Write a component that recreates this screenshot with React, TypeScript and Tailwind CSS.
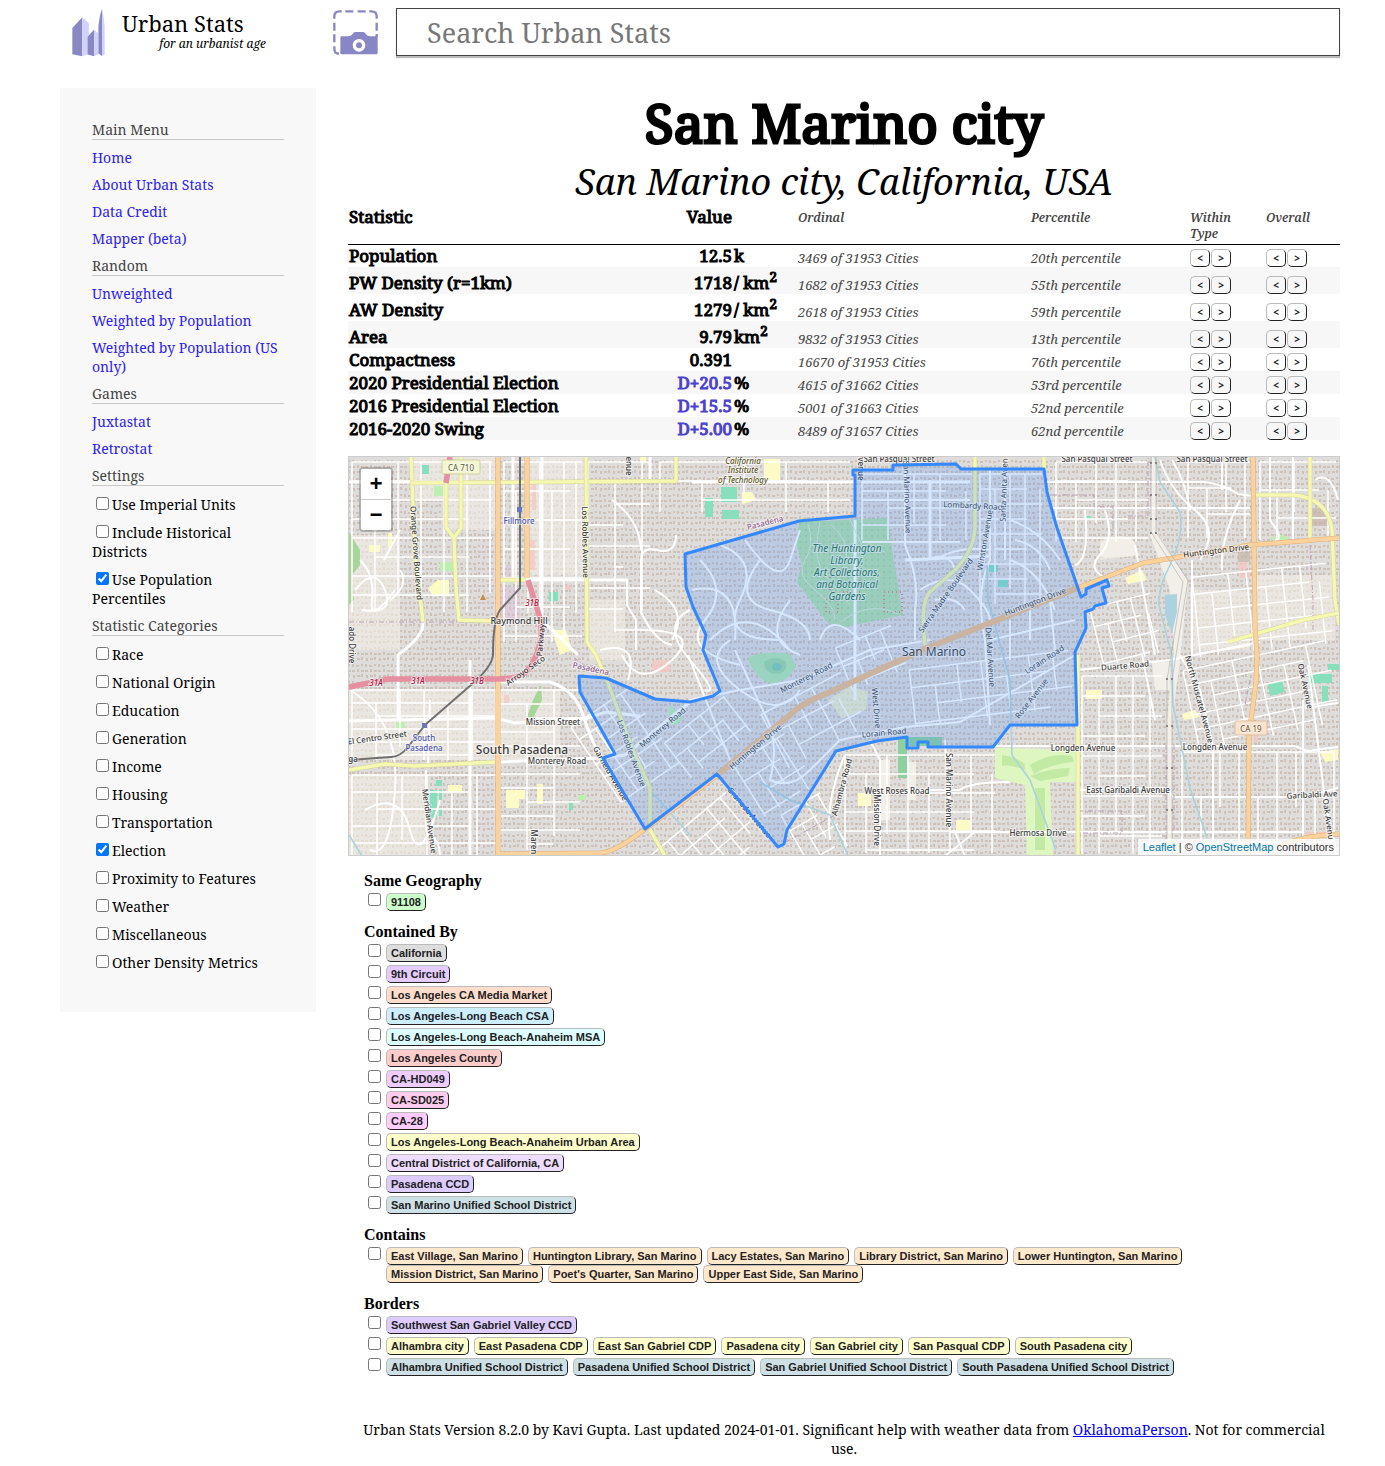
import React from "react";

const SERIF = "font-['Noto_Serif','DejaVu_Serif_Condensed',serif]";

const menu = [
  { title: "Main Menu", links: ["Home", "About Urban Stats", "Data Credit", "Mapper (beta)"] },
  { title: "Random", links: ["Unweighted", "Weighted by Population", "Weighted by Population (US only)"] },
  { title: "Games", links: ["Juxtastat", "Retrostat"] },
];

const settings = [
  { title: "Settings", items: ["Use Imperial Units", "Include Historical Districts", "Use Population Percentiles"] },
  {
    title: "Statistic Categories",
    items: ["Race", "National Origin", "Education", "Generation", "Income", "Housing", "Transportation", "Election", "Proximity to Features", "Weather", "Miscellaneous", "Other Density Metrics"],
  },
];

const checkedItems = ["Use Population Percentiles", "Election"];

type Stat = { name: string; value: string; unit: React.ReactNode; ordinal: string; pct: string; party?: boolean };

const stats: Stat[] = [
  { name: "Population", value: "12.5", unit: "k", ordinal: "3469 of 31953 Cities", pct: "20th percentile" },
  { name: "PW Density (r=1km)", value: "1718", unit: <>/ km<Sq /></>, ordinal: "1682 of 31953 Cities", pct: "55th percentile" },
  { name: "AW Density", value: "1279", unit: <>/ km<Sq /></>, ordinal: "2618 of 31953 Cities", pct: "59th percentile" },
  { name: "Area", value: "9.79", unit: <>km<Sq /></>, ordinal: "9832 of 31953 Cities", pct: "13th percentile" },
  { name: "Compactness", value: "0.391", unit: "", ordinal: "16670 of 31953 Cities", pct: "76th percentile" },
  { name: "2020 Presidential Election", value: "D+20.5", unit: "%", ordinal: "4615 of 31662 Cities", pct: "53rd percentile", party: true },
  { name: "2016 Presidential Election", value: "D+15.5", unit: "%", ordinal: "5001 of 31663 Cities", pct: "52nd percentile", party: true },
  { name: "2016-2020 Swing", value: "D+5.00", unit: "%", ordinal: "8489 of 31657 Cities", pct: "62nd percentile", party: true },
];

function Sq() {
  return <sup className="text-[14px]">2</sup>;
}

const related = [
  { title: "Same Geography", rows: [{ color: "bg-[#ccffcc]", tags: ["91108"] }] },
  {
    title: "Contained By",
    rows: [
      { color: "bg-[#dddddd]", tags: ["California"] },
      { color: "bg-[#e5ccff]", tags: ["9th Circuit"] },
      { color: "bg-[#ffddcc]", tags: ["Los Angeles CA Media Market"] },
      { color: "bg-[#cceeff]", tags: ["Los Angeles-Long Beach CSA"] },
      { color: "bg-[#ddffff]", tags: ["Los Angeles-Long Beach-Anaheim MSA"] },
      { color: "bg-[#ffcccc]", tags: ["Los Angeles County"] },
      { color: "bg-[#eeccff]", tags: ["CA-HD049"] },
      { color: "bg-[#ffccee]", tags: ["CA-SD025"] },
      { color: "bg-[#ffccff]", tags: ["CA-28"] },
      { color: "bg-[#ffffcc]", tags: ["Los Angeles-Long Beach-Anaheim Urban Area"] },
      { color: "bg-[#eeddff]", tags: ["Central District of California, CA"] },
      { color: "bg-[#ddccff]", tags: ["Pasadena CCD"] },
      { color: "bg-[#cce0e5]", tags: ["San Marino Unified School District"] },
    ],
  },
  {
    title: "Contains",
    rows: [
      {
        color: "bg-[#ffe8cc]",
        tags: ["East Village, San Marino", "Huntington Library, San Marino", "Lacy Estates, San Marino", "Library District, San Marino", "Lower Huntington, San Marino", "Mission District, San Marino", "Poet's Quarter, San Marino", "Upper East Side, San Marino"],
      },
    ],
  },
  {
    title: "Borders",
    rows: [
      { color: "bg-[#ddccff]", tags: ["Southwest San Gabriel Valley CCD"] },
      { color: "bg-[#ffffcc]", tags: ["Alhambra city", "East Pasadena CDP", "East San Gabriel CDP", "Pasadena city", "San Gabriel city", "San Pasqual CDP", "South Pasadena city"] },
      { color: "bg-[#cce0e5]", tags: ["Alhambra Unified School District", "Pasadena Unified School District", "San Gabriel Unified School District", "South Pasadena Unified School District"] },
    ],
  },
];

function Logo() {
  return (
    <svg viewBox="66 22 100 148" className="h-[49px] w-[33px]" aria-hidden="true">
      <path fill="#8a88c2" d="M67 82 97 50V168L67 162Z" />
      <path fill="#d0d1fc" d="M97 50 117 68V106L113 110V163L97 168Z" />
      <path fill="#8a88c2" d="M113 110 133 87V168L113 163Z" />
      <path fill="#d0d1fc" d="M133 87 145 98V163L133 168Z" />
      <path fill="#8a88c2" d="M146 78Q150 40 157 25V167L146 160Z" />
      <path fill="#d0d1fc" d="M157 25Q163 50 165 78V163L157 167Z" />
    </svg>
  );
}

function CameraIcon() {
  return (
    <svg viewBox="0 0 135 135" className="size-[45px]" aria-hidden="true">
      <g fill="none" stroke="#8886c4" strokeWidth="7">
        <path d="M4 26V19Q4 4 19 4H26M109 4H116Q131 4 131 19V26M4 109V116Q4 131 18 131" />
        <path d="M37 4H61M74 4H98M131 38V62M4 38V62M4 73V97M131 72V82" />
      </g>
      <path fill="#8886c4" d="M26 79H46Q54 79 58 73L61 69Q63 66 67 66H90Q94 66 96 69L99 73Q103 79 111 79H130Q134 79 134 83V129Q134 133 130 133H26Q22 133 22 129V83Q22 79 26 79Z" />
      <circle cx="78" cy="106" r="14" fill="#8886c4" stroke="#fff" strokeWidth="10" />
    </svg>
  );
}

function gridPath(x: number, y: number, w: number, h: number, dx: number, dy: number) {
  let d = "";
  let i = 0;
  for (let a = x; a <= x + w; a += dx, i++) {
    const cut = i % 3 === 1 ? dy : 0;
    d += `M${a} ${y + cut}V${y + h - (i % 4 === 2 ? dy : 0)}`;
  }
  i = 0;
  for (let b = y; b <= y + h; b += dy, i++) {
    const cut = i % 3 === 2 ? dx : 0;
    d += `M${x + cut} ${b}H${x + w - (i % 2 ? dx : 0)}`;
  }
  return d;
}

// x, y, width, height, column step, row step, rotation
const blocks: number[][] = [
  [352, 462, 140, 150, 23, 19, 0],
  [504, 462, 78, 180, 12, 29, 0],
  [588, 462, 62, 170, 27, 21, 0],
  [352, 690, 144, 70, 24, 13, 0],
  [352, 775, 144, 82, 25, 17, 0],
  [500, 690, 80, 160, 27, 14, 0],
  [660, 462, 190, 50, 42, 19, 0],
  [862, 474, 110, 66, 26, 17, 0],
  [980, 474, 62, 130, 15, 15, 0],
  [842, 635, 60, 46, 16, 20, -22],
  [912, 660, 160, 56, 24, 18, -7],
  [590, 700, 70, 90, 20, 15, -34],
  [670, 715, 76, 44, 15, 18, -38],
  [745, 745, 60, 60, 17, 19, -32],
  [770, 690, 90, 60, 19, 22, -28],
  [650, 820, 110, 66, 17, 19, -40],
  [793, 800, 45, 60, 14, 18, -30],
  [845, 755, 150, 98, 21, 19, 0],
  [1082, 676, 80, 178, 17, 20, 0],
  [1182, 752, 152, 100, 19, 45, 0],
  [1190, 655, 145, 82, 25, 15, -12],
  [1196, 570, 134, 80, 18, 17, -6],
  [1096, 600, 62, 60, 14, 19, -14],
  [1056, 462, 92, 80, 20, 19, 0],
  [1188, 462, 62, 76, 19, 26, 0],
  [1260, 462, 76, 78, 17, 28, 0],
];

const minorCurves = [
  "M676 535Q676 552 661 551Q641 545 641 560V612Q655 642 672 645M641 550Q640 520 612 500",
  "M627 580V605L636 620V650M600 650Q640 640 628 680M655 590Q690 610 672 640",
  "M622 655Q640 690 672 660T640 630M690 610Q660 625 690 660T705 690",
  "M700 560Q730 590 705 620T740 665M720 545Q760 560 740 600T780 640M692 590Q740 580 735 640",
  "M745 540Q780 590 790 560T800 530M760 560Q730 600 770 610T810 640M710 640Q750 600 790 650",
  "M790 600Q760 640 800 655M820 640Q830 610 860 640M730 640Q700 660 740 690T800 690",
  "M690 700 740 690 800 680 870 650 930 640M688 655 730 760M735 650 765 715Q780 740 770 780Q790 790 810 770L840 740 905 727 960 722 1075 655",
  "M905 470V545Q920 580 915 610V640M990 470V560Q975 590 985 640L990 725M1005 470V560M862 542H960M862 500H970",
  "M925 560Q950 550 955 570M920 590Q950 570 970 590T990 620M1010 560Q1040 570 1055 610M1010 520Q1040 530 1060 560M1010 620V660M1030 610V640M1050 600 1055 650",
  "M935 560Q960 545 990 550M935 600Q955 595 965 610M1015 540Q1040 545 1050 570M990 640 1075 620",
  "M830 840Q825 800 845 755M870 740 880 760V855M945 740 950 830M905 790H960Q970 782 1010 782M950 832H1303M975 832 945 856M955 832 965 856",
  "M1047 482H1205Q1225 485 1238 494L1253 496M1050 508H1250M1085 510Q1090 560 1075 565M1105 510Q1115 540 1100 555T1110 580M1135 545 1155 655",
  "M1160 460Q1170 490 1195 510T1200 560M1172 460Q1185 480 1190 510M1222 460V490M1240 500Q1220 540 1222 570",
  "M1078 670 1170 660 1260 642M995 746H1295L1307 751 1338 747M1078 790 1167 788 1173 797H1303L1338 788",
  "M1142 655 1155 720M1180 655 1200 690 1213 746V855M1308 665 1325 800 1336 855M1303 700V855M1305 708 1338 703M1192 655 1250 645",
  "M1270 455V520Q1285 540 1275 540M1293 455V540M1315 480Q1330 470 1338 500M1192 560V655",
  "M360 560Q375 575 372 600T395 590M355 590Q375 565 385 590T362 610M384 560 400 530M390 600Q410 585 400 570",
  "M350 690Q400 720 395 790T370 850M428 765 430 700M426 770V830Q440 840 440 856M365 810Q400 790 410 830T440 800",
];

const majorWhite = [
  "M423 622Q425 635 398 655V720",
  "M349 482H411M498 580H628M542 457V620L578 655M513 457V580",
  "M349 721 495 718 515 723 588 718 606 712 640 716",
  "M498 762 601 758 625 755 690 702",
  "M498 682H550Q575 690 583 715T601 758M470 660V855",
  "M692 482H855M862 482H970M650 457V480M855 520V700",
  "M930 480V560M905 560 990 556",
];

const MapLabel = ({ x, y, r = 0, s = 8, c = "#3c3c3c", i = false, children }: { x: number; y: number; r?: number; s?: number; c?: string; i?: boolean; children: string }) => (
  <text
    x={x}
    y={y}
    fontSize={s}
    fill={c}
    textAnchor="middle"
    dominantBaseline="central"
    stroke="#fff"
    strokeOpacity="0.6"
    strokeWidth="2"
    paintOrder="stroke"
    fontStyle={i ? "italic" : "normal"}
    transform={`rotate(${r} ${x} ${y})`}
  >
    {children}
  </text>
);

function MapDrawing() {
  const yellow = [
    "M411 457 412 482 415 552 423 622",
    "M411 483 676 481V457",
    "M446 483V527L454 538 461 528V457",
    "M454 538 456 588 459 620 495 621",
    "M586 457 587 642 596 655 606 678 631 745 650 788V827",
    "M349 770 385 764 415 766 495 762",
    "M975 457V528Q974 550 955 570L930 592Q920 602 925 645",
    "M1044 457V470M1078 655V856",
    "M1255 495H1293Q1328 498 1332 530L1335 600 1339 625",
    "M1310 457V540M1228 642 1303 620 1339 613M498 580H526",
    "M649 828 665 856",
  ];
  const orange = [
    "M498 457V856",
    "M527 457V578",
    "M1253 457 1255 628 1257 655 1256 682 1249 735 1248 856",
    "M500 854 600 853Q615 852 641 832L680 804 717 775 790 715Q800 704 830 692L927 648 1010 615 1080 587 1143 563 1250 545 1340 538",
    "M1280 846Q1300 836 1340 834",
  ];
  return (
    <svg viewBox="349 457 990 398" preserveAspectRatio="xMidYMid slice" className="absolute inset-0 size-full font-['Noto_Sans','Open_Sans',sans-serif]" role="img" aria-label="Map of San Marino, California">
      <defs>
        <pattern id="houses" width="13" height="17" patternUnits="userSpaceOnUse">
          <rect width="13" height="17" fill="#dfdddb" />
          <path d="M1 1h2v3h-2zM5 2h3v2h-3zM10 1h2v2h-2zM1 7h3v2h-3zM6 6h2v3h-2zM10 7h3v2h-3zM2 12h2v3h-2zM6 12h3v2h-3zM10 11h2v3h-2z" fill="#cdc2ba" />
        </pattern>
        <pattern id="trees" width="6" height="6" patternUnits="userSpaceOnUse">
          <rect width="6" height="6" fill="#b5dfab" />
          <circle cx="2" cy="2" r="0.8" fill="#93c98e" />
        </pattern>
      </defs>
      <rect x="349" y="457" width="990" height="398" fill="url(#houses)" />

      <g fill="#f2ece4" fillOpacity="0.6">
        <path d="M349 535H400V650H349ZM410 457H495V500H410ZM349 775H425V856H349ZM590 600H625V660H590ZM500 690H560V760H500Z" />
        <path d="M445 500H495V530H445ZM1100 540Q1130 530 1136 545L1140 555 1100 560ZM349 690H495V760H349ZM530 457H585V575H530Z" />
        <path d="M1257 575H1335V640H1257ZM1190 590H1250V650H1190Z" />
      </g>
      <g fill="#f2efe9">
        <path d="M1152 457H1156V530L1188 582 1180 660 1172 720V856H1167V720L1174 650 1170 590 1150 535Z" />
        <path d="M880 760H890V820H880ZM908 762H916V800H908ZM1152 662H1170V690H1155ZM1102 542Q1130 530 1136 545L1134 556 1104 558Q1096 552 1102 542Z" />
      </g>
      <path fill="#d9b9d8" fillOpacity="0.4" d="M500 587H520V620H500ZM506 565H512V578H506Z" />
      <path fill="#def6c0" d="M995 748 1077 750V782H1050L1053 856H1027L1025 785 995 778Z" />
      <path fill="#c2eaa4" d="M1030 765Q1050 752 1072 756L1074 762Q1050 764 1034 774ZM1030 776Q1050 768 1070 768L1068 776 1040 781ZM1035 788H1045V850H1035ZM1002 755Q1014 756 1025 764V770Q1010 764 1002 766Z" />
      <path fill="#a8d59a" d="M349 532 360 550V565L352 575 354 600 349 605ZM533 700 541 685 542 700 532 720H526Z" />
      <path fill="url(#trees)" d="M799 522 888 518 893 555 903 615 840 628 827 622 797 582 802 565 797 545Z" />
      <path fill="#b4e6b0" d="M748 658Q760 650 790 654L796 666Q788 682 772 684 754 678 748 658Z" />
      <path fill="#a0d9a4" d="M764 662Q776 654 786 662 788 674 774 674 764 672 764 662Z" />
      <ellipse cx="777" cy="667" rx="5" ry="4" fill="#84cdb0" />
      <path fill="#8fd0a0" d="M898 737H942V746H907V778H898Z" />
      <g fill="#88dfbe">
        <path d="M422 465H429V474H422ZM549 592H558V601H549ZM721 487H737V502H721ZM705 498H713V517H705ZM722 510H739V519H722ZM430 790H437V818H430ZM439 790H442V800H439ZM439 808H442V816H439Z" />
        <path d="M1268 684 1282 680 1285 692 1270 696ZM1310 674H1332V683H1310ZM1328 664H1339V670H1328ZM1322 686H1328V702H1322ZM569 802H573V810H569ZM989 565H998V572H989ZM998 579H1008V587H998ZM1086 516H1091V519H1086ZM436 780H442V786H436Z" />
      </g>
      <path fill="#bdf0b0" d="M434 486H444V496H434ZM440 562H453V571H440ZM396 722H405V728H396ZM578 795H586V800H578ZM670 705 683 718 676 725 668 722ZM1270 540Q1280 530 1290 540Z" />
      <g fill="#fcfbc5">
        <path d="M428 588 438 580H449V596H433ZM448 785H462V792H448ZM506 790H525V799H519V808H506ZM537 784H543V804H537ZM1086 690H1102V699H1086ZM858 793H871V806H858ZM956 820H971V830H956ZM1182 714 1195 710 1200 717 1184 720ZM1320 752 1338 749V760L1325 762ZM1125 578 1142 570 1147 580 1128 584ZM742 492H752L756 500 742 504ZM552 630H566L572 650 560 655ZM640 457H646V463H640ZM764 459H780V480H764ZM369 545H380V552H369ZM388 533H392V548H388Z" />
        <path d="M828 700 850 686 868 692 866 710 842 718Z" fillOpacity="0.6" />
      </g>
      <path fill="#f6c5bf" d="M532 480H536V510H532ZM530 540H535V570H530ZM565 585H571V590H565ZM504 695H509V703H504ZM1238 562H1247V569H1238ZM1240 570H1250V578H1240ZM1254 735H1258V743H1254ZM652 660H670V672H652ZM1305 832H1338V836H1305Z" fillOpacity="0.7" />
      <path d="M830 570H860V592H830ZM884 592H902V612H884ZM826 600H838V612H826Z" fill="none" stroke="#d98c80" strokeWidth="2" strokeDasharray="1 3" />
      <path fill="#aad3df" d="M1165 595 1177 594V612L1172 633 1165 615Z" />
      <path fill="#c3b3a8" d="M1311 508H1325L1330 526H1311ZM1238 552H1250V562H1238Z" fillOpacity="0.7" />

      <g fill="none" stroke="#fff" strokeWidth="1.5">
        {blocks.map(([x, y, w, h, dx, dy, r], n) => (
          <path key={n} d={gridPath(x, y, w, h, dx, dy)} transform={`rotate(${r} ${x + w / 2} ${y + h / 2})`} />
        ))}
        {minorCurves.map((d) => (
          <path key={d} d={d} strokeWidth="2" />
        ))}
        {majorWhite.map((d) => (
          <path key={d} d={d} strokeWidth="3" />
        ))}
      </g>
      <path fill="none" stroke="#dcecd4" strokeWidth="1" d="M808 524Q815 545 805 560T815 590 835 620M820 522Q812 560 825 575T850 605M850 520 862 545 885 552M840 622Q870 600 898 614M830 524Q850 540 846 560" />
      <g fill="none" stroke="#aad3df" strokeWidth="1.6">
        <path d="M1155 457 1160 482 1180 512Q1184 538 1170 565T1160 610L1172 655 1173 705 1190 788 1207 838" />
        <path d="M987 565 988 600 1010 680 1012 755 1030 780 1056 850M760 782 790 800 830 815 848 856M650 790 690 835M349 835 362 856" />
      </g>
      <g fill="none" stroke="#b9a0b8" strokeWidth="1" strokeDasharray="5 2 1 2">
        <path d="M349 622H495M1052 495H1094V507H1113V535M1128 516H1148V457M1078 811H1122V833H1080M1166 745V856M1174 745V830M1310 545 1313 600V630M1250 680 1245 705M786 842 835 815M574 658 600 675" />
      </g>
      <g fill="none" strokeLinejoin="round">
        {yellow.map((d) => (
          <g key={d}>
            <path d={d} stroke="#d3d69a" strokeWidth="4.4" />
            <path d={d} stroke="#f4f8b0" strokeWidth="3.4" />
          </g>
        ))}
        {orange.map((d) => (
          <g key={d}>
            <path d={d} stroke="#dcae7a" strokeWidth="5" />
            <path d={d} stroke="#fcd29c" strokeWidth="4" />
          </g>
        ))}
        <path d="M720 773 790 715Q800 704 830 692L927 648 1010 615 1080 587" stroke="#f0c08a" strokeWidth="6" />
        <path d="M450 457 446 483M528 580 540 618Q545 650 525 673 515 679 498 679H388L349 687" stroke="#e58fa0" strokeWidth="5.5" />
        <path d="M520 457V588L500 610Q493 620 493 655 492 667 471 685L425 725 408 747Q400 757 391 757L349 760" stroke="#707070" strokeWidth="2" />
      </g>
      <path fill="#6c78b8" d="M517 507H522V512H517ZM422 723H427V728H422Z" />
      <path fill="#c98a45" d="M483 594 486 600H480Z" />
      <g fill="#777">
        {[462, 494, 518, 532].map((y) => (
          <path key={y} d={`M1150 ${y}h2v2h-2zM1155 ${y}h2v2h-2z`} />
        ))}
        {[678, 725, 767, 809].map((y) => (
          <path key={y} d={`M1166 ${y}h2v2h-2zM1171 ${y}h2v2h-2z`} />
        ))}
      </g>
      <path fill="none" stroke="#aaa" strokeWidth="0.6" d="M1151 457V532L1183 582 1167 680V856M1156 457V532L1188 580 1172 680V856" />

      <g fontWeight="500">
        <MapLabel x={417} y={553} r={86}>Orange Grove Boulevard</MapLabel>
        <MapLabel x={586} y={542} r={89}>Los Robles Avenue</MapLabel>
        <MapLabel x={629} y={466} r={90}>enue</MapLabel>
        <MapLabel x={519} y={620} s={9}>Raymond Hill</MapLabel>
        <MapLabel x={519} y={520} c="#4a55b0">Fillmore</MapLabel>
        <MapLabel x={424} y={737} c="#4a55b0">South</MapLabel>
        <MapLabel x={424} y={747} c="#4a55b0">Pasadena</MapLabel>
        <MapLabel x={532} y={602} c="#a02040" i>31B</MapLabel>
        <MapLabel x={376} y={682} c="#a02040" i>31A</MapLabel>
        <MapLabel x={418} y={680} c="#a02040" i>31A</MapLabel>
        <MapLabel x={477} y={680} c="#a02040" i>31B</MapLabel>
        <MapLabel x={525} y={670} r={-35}>Arroyo Seco</MapLabel>
        <MapLabel x={540} y={640} r={-85}>Parkway</MapLabel>
        <MapLabel x={377} y={737} r={-8}>El Centro Street</MapLabel>
        <MapLabel x={353} y={758}>ga</MapLabel>
        <MapLabel x={553} y={721}>Mission Street</MapLabel>
        <MapLabel x={557} y={760}>Monterey Road</MapLabel>
        <MapLabel x={522} y={749} s={12}>South Pasadena</MapLabel>
        <MapLabel x={430} y={821} r={82}>Meridian Avenue</MapLabel>
        <MapLabel x={534} y={842} r={90}>Maren</MapLabel>
        <MapLabel x={352} y={645} r={90}>ado Drive</MapLabel>
        <MapLabel x={591} y={668} r={12} c="#8d5f8d">Pasadena</MapLabel>
        <MapLabel x={765} y={522} r={-14} c="#8d5f8d">Pasadena</MapLabel>
        <MapLabel x={743} y={460} c="#5d5a28" i>California</MapLabel>
        <MapLabel x={743} y={469} c="#5d5a28" i>Institute</MapLabel>
        <MapLabel x={743} y={479} c="#5d5a28" i>of Technology</MapLabel>
        <MapLabel x={611} y={773} r={60}>Garfield Avenue</MapLabel>
        <MapLabel x={750} y={812} r={50}>Granada Avenue</MapLabel>
        <MapLabel x={841} y={787} r={-75}>Alhambra Road</MapLabel>
        <MapLabel x={897} y={790}>West Roses Road</MapLabel>
        <MapLabel x={877} y={820} r={90}>Mission Drive</MapLabel>
        <MapLabel x={949} y={790} r={90}>San Marino Avenue</MapLabel>
        <MapLabel x={1038} y={832}>Hermosa Drive</MapLabel>
        <MapLabel x={1083} y={747}>Longden Avenue</MapLabel>
        <MapLabel x={1215} y={746}>Longden Avenue</MapLabel>
        <MapLabel x={1128} y={789}>East Garibaldi Avenue</MapLabel>
        <MapLabel x={1312} y={794} r={-3}>Garibaldi Ave</MapLabel>
        <MapLabel x={1125} y={665} r={-5}>Duarte Road</MapLabel>
        <MapLabel x={1200} y={699} r={75}>North Muscatel Avenue</MapLabel>
        <MapLabel x={1306} y={686} r={78}>Oak Avenue</MapLabel>
        <MapLabel x={1329} y={819} r={82}>Oak Avenu</MapLabel>
        <MapLabel x={1216} y={550} r={-7}>Huntington Drive</MapLabel>
        <MapLabel x={899} y={458}>San Pasqual Street</MapLabel>
        <MapLabel x={1097} y={458}>San Pasqual Street</MapLabel>
        <MapLabel x={1212} y={458}>San Pasqual Street</MapLabel>
        <MapLabel x={861} y={469} r={90}>venue</MapLabel>
      </g>
      <g strokeWidth="0.7">
        <rect x="442" y="460" width="38" height="14" rx="1.5" fill="#f3f6cf" stroke="#bfc28a" />
        <rect x="1235" y="721" width="32" height="14" rx="1.5" fill="#f9e2cb" stroke="#d8b08c" />
      </g>
      <MapLabel x={461} y={467} c="#555a30">CA 710</MapLabel>
      <MapLabel x={1251} y={728} c="#704520">CA 19</MapLabel>

      <MapLabel x={973} y={505} r={3}>Lombardy Road</MapLabel>
      <MapLabel x={908} y={497} r={88}>San Marino Avenue</MapLabel>
      <MapLabel x={1003} y={490} r={-88}>Santa Anita Aven</MapLabel>
      <MapLabel x={984} y={540} r={-80}>Winston Avenue</MapLabel>
      <MapLabel x={945} y={595} r={-55}>Sierra Madre Boulevard</MapLabel>
      <MapLabel x={1035} y={601} r={-21}>Huntington Drive</MapLabel>
      <MapLabel x={755} y={746} r={-40}>Huntington Drive</MapLabel>
      <MapLabel x={806} y={677} r={-27}>Monterey Road</MapLabel>
      <MapLabel x={662} y={727} r={-40}>Monterey Road</MapLabel>
      <MapLabel x={632} y={753} r={70}>Los Robles Avenue</MapLabel>
      <MapLabel x={877} y={708} r={85}>West Drive</MapLabel>
      <MapLabel x={884} y={732} r={-5}>Lorain Road</MapLabel>
      <MapLabel x={1044} y={659} r={-33}>Lorain Road</MapLabel>
      <MapLabel x={1031} y={698} r={-52}>Rose Avenue</MapLabel>
      <MapLabel x={991} y={657} r={86}>Del Mar Avenue</MapLabel>
      <MapLabel x={934} y={651} s={12}>San Marino</MapLabel>
      {["The Huntington", "Library,", "Art Collections,", "and Botanical", "Gardens"].map((t, n) => (
        <MapLabel key={t} x={847} y={548 + n * 12} s={10} c="#24703f" i>{t}</MapLabel>
      ))}

      <path
        d="M853 470H893V465L956 464 961 469H1044L1047 492 1057 528 1081 597 1086 594V589L1107 580 1109 586 1102 588 1106 603 1095 606 1093 609 1085 612 1086 628 1075 652 1077 725H1010L993 747H928V742H918V748H907V737L877 741 836 751 787 830 784 844 778 847 717 774 645 829 603 758 615 754 580 692 579 676 606 678 655 699 690 702 713 696 720 691 703 650 706 635 693 607 686 587 685 554 799 521 855 516V475H853Z"
        fill="#3388ff"
        fillOpacity="0.2"
        stroke="#3388ff"
        strokeWidth="3"
        strokeLinejoin="round"
      />
    </svg>
  );
}

function StepButtons({ label }: { label: string }) {
  return (
    <div className="flex gap-px">
      {["<", ">"].map((s) => (
        <button key={s} aria-label={`${s === "<" ? "Previous" : "Next"} ${label}`} className="h-[18px] w-5 rounded-[5px] border border-[#bbb] border-r-[#222] border-b-[#222] font-['Open_Sans','Noto_Sans',sans-serif] text-[10px] leading-3 font-bold text-[#222]">
          {s}
        </button>
      ))}
    </div>
  );
}

function Sidebar() {
  return (
    <nav className="flex w-64 shrink-0 flex-col gap-2 self-start bg-[#f8f8f8] px-8 pt-8 pb-10 text-[14px] leading-[19px]">
      {menu.map((g) => (
        <React.Fragment key={g.title}>
          <h2 className="border-b border-[#c8c8c8] text-[#444]">{g.title}</h2>
          {g.links.map((l) => (
            <a key={l} href="#" className="text-[#2c22ee]">{l}</a>
          ))}
        </React.Fragment>
      ))}
      {settings.map((g) => (
        <React.Fragment key={g.title}>
          <h2 className="border-b border-[#c8c8c8] text-[#444]">{g.title}</h2>
          {g.items.map((t) => (
            <label key={t} className="pt-px">
              <input type="checkbox" defaultChecked={checkedItems.includes(t)} className="mr-[3px] ml-1 size-[13px] align-[0px]" />
              {t}
            </label>
          ))}
        </React.Fragment>
      ))}
    </nav>
  );
}

function StatsTable() {
  const heavy = "font-normal [-webkit-text-stroke:1px_currentColor]";
  return (
    <table className="w-full table-fixed border-collapse text-left">
      <colgroup>
        <col />
        <col className="w-[80px]" />
        <col className="w-[64px]" />
        <col className="w-[233px]" />
        <col className="w-[159px]" />
        <col className="w-[76px]" />
        <col className="w-[75px]" />
      </colgroup>
      <thead>
        <tr className="h-[39px] border-b border-black align-top text-[12px] leading-4 text-[#444] italic">
          <th className={`px-px text-[17px] leading-6 text-black not-italic ${heavy}`}>Statistic</th>
          <th className={`px-px text-right text-[17px] leading-6 text-black not-italic ${heavy}`}>Value</th>
          <th />
          <th className="px-px pt-[5px] font-semibold">Ordinal</th>
          <th className="px-px pt-[5px] font-semibold">Percentile</th>
          <th className="px-px pt-[5px] pr-6 font-semibold">Within Type</th>
          <th className="px-px pt-[5px] font-semibold">Overall</th>
        </tr>
      </thead>
      <tbody>
        {stats.map((s) => {
          const tall = s.unit !== "" && typeof s.unit !== "string";
          return (
            <tr key={s.name} className={`align-bottom leading-[22px] even:bg-[#f7f7f7] ${tall ? "h-[27px]" : "h-[23px]"}`}>
              <th className={`px-px text-[17px] ${heavy}`}>{s.name}</th>
              <td className={`px-px text-right text-[17px] ${heavy} ${s.party ? "text-[#4b42cf]" : ""}`}>{s.value}</td>
              <td className={`px-px text-[17px] whitespace-nowrap ${heavy}`}>{s.unit}</td>
              <td className="px-px text-[13px] leading-[18px] text-[#444] italic">{s.ordinal}</td>
              <td className="px-px text-[13px] leading-[18px] text-[#444] italic">{s.pct}</td>
              <td className="px-px"><StepButtons label={`${s.name} within type`} /></td>
              <td className="px-px"><StepButtons label={`${s.name} overall`} /></td>
            </tr>
          );
        })}
      </tbody>
    </table>
  );
}

function Related() {
  return (
    <section className="mt-4 flex flex-col gap-[9px] px-4">
      {related.map((g) => (
        <div key={g.title}>
          <h3 className="mb-[3px] font-['Liberation_Serif',serif] text-[16px] leading-[18px] font-bold">{g.title}</h3>
          {g.rows.map((r) => (
            <div key={r.tags[0]} className="mb-[3px] flex">
              <input type="checkbox" aria-label={`Show ${r.tags[0]}`} className="mr-[5px] ml-1 size-[13px] shrink-0" />
              <div className="flex max-w-[800px] flex-wrap gap-x-[5px]">
                {r.tags.map((t) => (
                  <a key={t} href="#" className={`h-[18px] rounded-[5px] border border-[#bbb] border-r-[#222] border-b-[#222] px-1 font-['Liberation_Sans',sans-serif] text-[11px] leading-4 font-bold text-[#222] ${r.color}`}>
                    {t}
                  </a>
                ))}
              </div>
            </div>
          ))}
        </div>
      ))}
    </section>
  );
}

export default function App() {
  return (
    <div className={`bg-white pt-2 pr-[45px] pb-2 pl-[60px] text-black ${SERIF}`}>
      <header className="flex h-12 items-center">
        <a href="#" className="flex w-[273px] items-center pl-3">
          <Logo />
          <span className="ml-[17px] flex w-[144px] flex-col pb-1">
            <span className="text-[22px] leading-7">Urban Stats</span>
            <span className="text-right text-[12px] leading-[14px] italic">for an urbanist age</span>
          </span>
        </a>
        <button aria-label="Take screenshot">
          <CameraIcon />
        </button>
        <input type="text" aria-label="Search Urban Stats" placeholder="Search Urban Stats" className="ml-[18px] h-12 min-w-0 flex-1 border border-[#444] px-[30px] text-[27px] shadow-[0_2px_1px_#bbb] placeholder:text-[#777]" />
      </header>
      <div className="mt-8 flex gap-8">
        <Sidebar />
        <main className="min-w-0 flex-1">
          <h1 className="pt-0.5 pb-0.5 text-center text-[53px] leading-[66px] [-webkit-text-stroke:3px_currentColor]">San Marino city</h1>
          <h2 className="text-center text-[36px] leading-[47px] italic">San Marino city, California, USA</h2>
          <StatsTable />
          <div className="relative mt-4 h-[400px] overflow-hidden border border-[#ccc]">
            <MapDrawing />
            <div className="absolute top-2.5 left-2.5 flex w-[34px] flex-col overflow-hidden rounded border-2 border-black/20 bg-clip-padding font-['Liberation_Mono',monospace] text-[22px] leading-[26px] font-bold">
              <button aria-label="Zoom in" className="h-[31px] border-b border-[#ccc] bg-white pt-1">+</button>
              <button aria-label="Zoom out" className="h-[30px] bg-white pt-1">−</button>
            </div>
            <div className="absolute right-0 bottom-0 bg-white/80 px-[5px] font-['Liberation_Sans',sans-serif] text-[11px] leading-4 text-[#333]">
              <a href="#" className="text-[#0078a8]">Leaflet</a> | © <a href="#" className="text-[#0078a8]">OpenStreetMap</a> contributors
            </div>
          </div>
          <Related />
          <footer className="mt-[41px] px-3 text-center text-[14px] leading-[19px]">
            Urban Stats Version 8.2.0 by Kavi Gupta. Last updated 2024-01-01. Significant help with weather data from{" "}
            <a href="#" className="text-[#0000ee] underline">OklahomaPerson</a>. Not for commercial use.
          </footer>
        </main>
      </div>
    </div>
  );
}
